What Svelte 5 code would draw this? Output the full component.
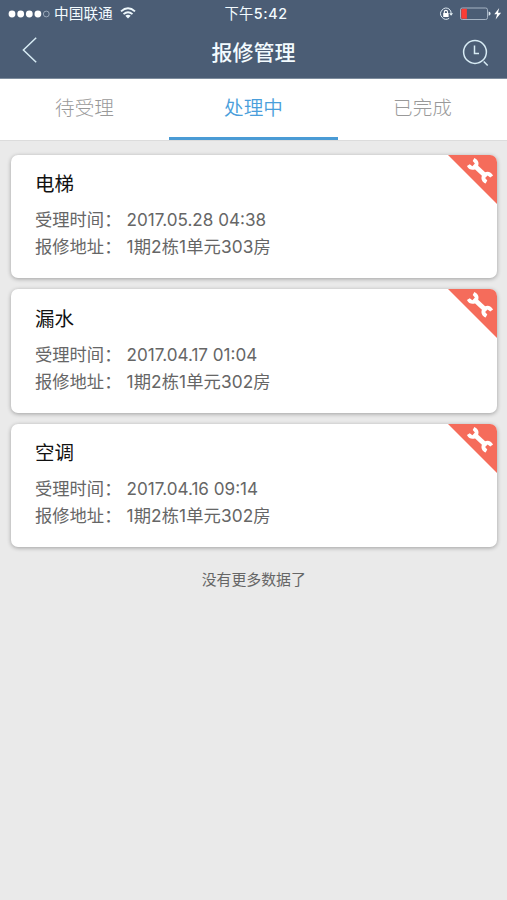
<script>
  const tabs = ['待受理', '处理中', '已完成'];
  const repairs = [
    { title: '电梯', time: '2017.05.28 04:38', room: '1期2栋1单元303房' },
    { title: '漏水', time: '2017.04.17 01:04', room: '1期2栋1单元302房' },
    { title: '空调', time: '2017.04.16 09:14', room: '1期2栋1单元302房' }
  ];
  let active = $state(1);
</script>

<div class="screen">
  <header>
    <div class="status">
      <div class="carrier">
        <svg width="42" height="10" viewBox="0 0 42 10">
          <g fill="#fff">
            <circle cx="4" cy="5" r="3.4" /><circle cx="12.7" cy="5" r="3.4" />
            <circle cx="21.3" cy="5" r="3.4" /><circle cx="29.9" cy="5" r="3.4" />
          </g>
          <circle cx="38.3" cy="5" r="2.9" fill="none" stroke="#aebccc" stroke-width="0.8" />
        </svg>
        <span>中国联通</span>
        <svg class="wifi" width="16" height="12" viewBox="0 0 16 12">
          <g fill="none" stroke="#eef8fc" stroke-width="1.9">
            <path d="M1 4.4Q8-1.8 15 4.4" />
            <path d="M3.5 7.1Q8 3.2 12.5 7.1" />
          </g>
          <path d="M5.3 8.7Q8 6.7 10.7 8.7L8 11.6Z" fill="#eef8fc" />
        </svg>
      </div>
      <div class="clock">下午<b>5:42</b></div>
      <div class="power">
        <svg width="14" height="14" viewBox="0 0 14 14">
          <path d="M10.2 2.1A5.5 5.5 0 1 0 10.2 11.3M10.2 2.1A5.5 5.5 0 0 1 12.2 6.4" fill="none" stroke="#dce8f1" stroke-width="1" />
          <path d="M10.2 6.2h3.8l-1.9 2.6z" fill="#eef8fc" />
          <rect x="4.2" y="6" width="5.4" height="4" rx=".5" fill="#fff" />
          <path d="M5.3 6.5V5a1.6 1.6 0 0 1 3.2 0v1.5" fill="none" stroke="#fff" stroke-width="1.1" />
        </svg>
        <svg class="battery" width="42" height="14" viewBox="0 0 42 14">
          <rect x=".5" y="1" width="27" height="11.5" rx="1.8" fill="none" stroke="#a6b4c4" />
          <path d="M2.5 1.7H6.9v10.1H2.5q-1.2 0-1.2-1.2V2.9q0-1.2 1.2-1.2Z" fill="#fb3d35" />
          <path d="M28.6 4.6q2 .4 2 2.1t-2 2.1z" fill="#dce6ee" />
          <path d="M39.2 1 34.3 7.2h2.8L35.6 12.6 41.1 5.8H38z" fill="#fff" />
        </svg>
      </div>
    </div>
    <nav>
      <svg class="back" width="16" height="28" viewBox="0 0 16 28">
        <path d="M14.2 1.7 1.4 14l12.8 12.3" fill="none" stroke="#d7ebf4" stroke-width="1.5" />
      </svg>
      <h1>报修管理</h1>
      <svg width="28" height="28" viewBox="0 0 28 28" fill="none" stroke="#d7ebf4" stroke-width="1.5">
        <circle cx="13" cy="13" r="11.4" />
        <path d="M12.5 6.5v8h4.5M21.7 22.5l4 4" />
      </svg>
    </nav>
  </header>

  <div class="tabs">
    {#each tabs as tab, i}
      <button class:active={active === i} onclick={() => (active = i)}>{tab}</button>
    {/each}
  </div>

  <main>
    {#each repairs as item}
      <article>
        <svg class="corner" width="49" height="49" viewBox="0 0 49 49">
          <path d="M0 0H49V49Z" fill="#f56c5b" />
          <g transform="translate(32 15.8) rotate(43)" fill="#fff">
            <rect x="-7" y="-2.4" width="14" height="4.8" />
            <path d="M-12.8 -5.4L-12 -2.2L-8.7 -1.8V1.8L-12 2.2L-12.8 5.4C-9 6.9-5.6 5.1-4.6 2V-2C-5.6 -5.1-9 -6.9-12.8 -5.4Z" />
            <path d="M12.8 -5.4L12 -2.2L8.7 -1.8V1.8L12 2.2L12.8 5.4C9 6.9 5.6 5.1 4.6 2V-2C5.6 -5.1 9 -6.9 12.8 -5.4Z" />
          </g>
        </svg>
        <h2>{item.title}</h2>
        <p><span class="label">受理时间：</span><span class="time">{item.time}</span></p>
        <p><span class="label">报修地址：</span><span class="room">{item.room}</span></p>
      </article>
    {/each}
    <div class="end">没有更多数据了</div>
  </main>
</div>

<style>
  :global(body) { margin: 0; background: #eaeaea; }
  .screen {
    width: 507px;
    height: 900px;
    overflow: hidden;
    background: #eaeaea;
    font-family: Inter, 'Noto Sans CJK SC', sans-serif;
  }
  svg { display: block; flex: none; }
  header {
    height: 79px;
    box-sizing: border-box;
    background: #4b5d75;
    border-bottom: 1px solid #7d8c9d;
    color: #f3fbff;
  }
  .status {
    height: 27px;
    display: grid;
    grid-template-columns: 1fr auto 1fr;
    align-items: center;
    padding: 0 5px 0 8px;
    font-size: 14.7px;
    line-height: 27px;
  }
  .carrier, .power { display: flex; align-items: center; }
  .carrier span { margin-left: 4px; padding-top: 1px; line-height: 26px; }
  .wifi { margin: -1px 0 0 7.5px; }
  .clock { font-size: 14.3px; letter-spacing: .4px; margin-left: 2px; }
  .clock b { font-weight: 500; letter-spacing: .6px; }
  .power { justify-content: flex-end; }
  .battery { margin-left: 7px; }
  nav {
    height: 51px;
    display: flex;
    align-items: center;
    justify-content: space-between;
    padding: 0 17px 0 22px;
  }
  .back { margin: -5px 7px 0 0; }
  h1 { margin: 0; padding-top: 1px; font-size: 21px; font-weight: 500; line-height: 50px; }
  .tabs {
    height: 61px;
    box-sizing: border-box;
    display: flex;
    background: #fff;
  }
  button {
    flex: 1;
    height: 61px;
    box-sizing: border-box;
    padding: 0;
    border: 0;
    border-bottom: 3px solid transparent;
    background: none;
    font: 300 19.6px/58px Inter, 'Noto Sans CJK SC', sans-serif;
    color: #999;
  }
  button.active { color: #4a9edb; border-color: #4a9bd5; font-weight: 350; }
  main {
    display: flex;
    flex-direction: column;
    gap: 11px;
    padding: 13.5px 10px 0 10.5px;
    border-top: 1px solid #dcdcdc;
  }
  article {
    position: relative;
    height: 123.5px;
    box-sizing: border-box;
    padding: 15.5px 24.5px 0;
    background: #fff;
    border-radius: 7px;
    box-shadow: 0 1px 4px rgba(0, 0, 0, .32);
    overflow: hidden;
  }
  .corner { position: absolute; top: 0; right: 0; }
  h2 { margin: 0 0 8px; font-size: 19.5px; font-weight: 400; line-height: 28px; color: #111; }
  p { display: flex; margin: 0; font-size: 17.3px; line-height: 27px; color: #666; }
  .label { width: 91.5px; }
  .time { font-size: 17.1px; }
  .room { letter-spacing: .1px; }
  .end { margin-top: 10px; text-align: center; font-size: 14.9px; line-height: 24px; color: #666; }
</style>
